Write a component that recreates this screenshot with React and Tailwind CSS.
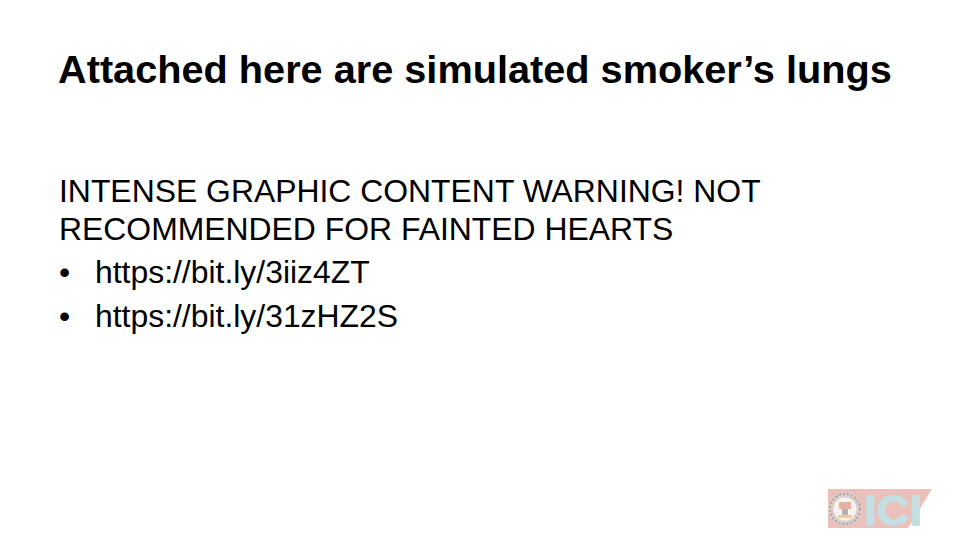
function OiciLogo() {
  return (
    <svg width="106" height="50" viewBox="0 0 106 50" className="block blur-[0.6px]">
      <polygon points="1,5 105,5 81,44 1,44" fill="#ecc0ba" />
      <circle cx="18" cy="25" r="17" fill="#dccfcb" />
      <circle cx="18" cy="25" r="15" fill="none" stroke="#a9a3a6" strokeWidth="2" strokeDasharray="2 2" />
      <circle cx="18" cy="25" r="11.5" fill="#f8f3ee" />
      <rect x="12" y="18" width="12" height="7" fill="#e6b39e" />
      <rect x="15" y="25" width="6" height="6" fill="#b5b2b4" />
      <rect x="11" y="31" width="14" height="3" fill="#ead0a0" />
      <text x="37" y="41" fontFamily="Liberation Sans, sans-serif" fontWeight="700" fontSize="42" textLength="58" lengthAdjust="spacingAndGlyphs" fill="#c4dfe2" stroke="#c4dfe2" strokeWidth="1.5">ICI</text>
    </svg>
  );
}

export default function App() {
  return (
    <div className="w-[960px] h-[540px] bg-white text-black flex flex-col font-['Liberation_Sans',sans-serif] overflow-hidden">
      <h1 className="pt-[46px] pl-[58px] text-[39.7px] leading-[46px] font-bold whitespace-nowrap">Attached here are simulated smoker’s lungs</h1>
      <div className="pt-[80px] pl-[59px] pr-[60px] text-[31.9px]">
        <p className="leading-[38px]">INTENSE GRAPHIC CONTENT WARNING! NOT<br />RECOMMENDED FOR FAINTED HEARTS</p>
        <ul className="mt-[3px] flex flex-col gap-[1px]">
          <li className="flex h-[43px] items-center"><span className="w-[36px]">•</span><span>https://bit.ly/3iiz4ZT</span></li>
          <li className="flex h-[43px] items-center"><span className="w-[36px]">•</span><span>https://bit.ly/31zHZ2S</span></li>
        </ul>
      </div>
      <div className="mt-auto flex justify-end pr-[27px] pb-[6px]">
        <OiciLogo />
      </div>
    </div>
  );
}
